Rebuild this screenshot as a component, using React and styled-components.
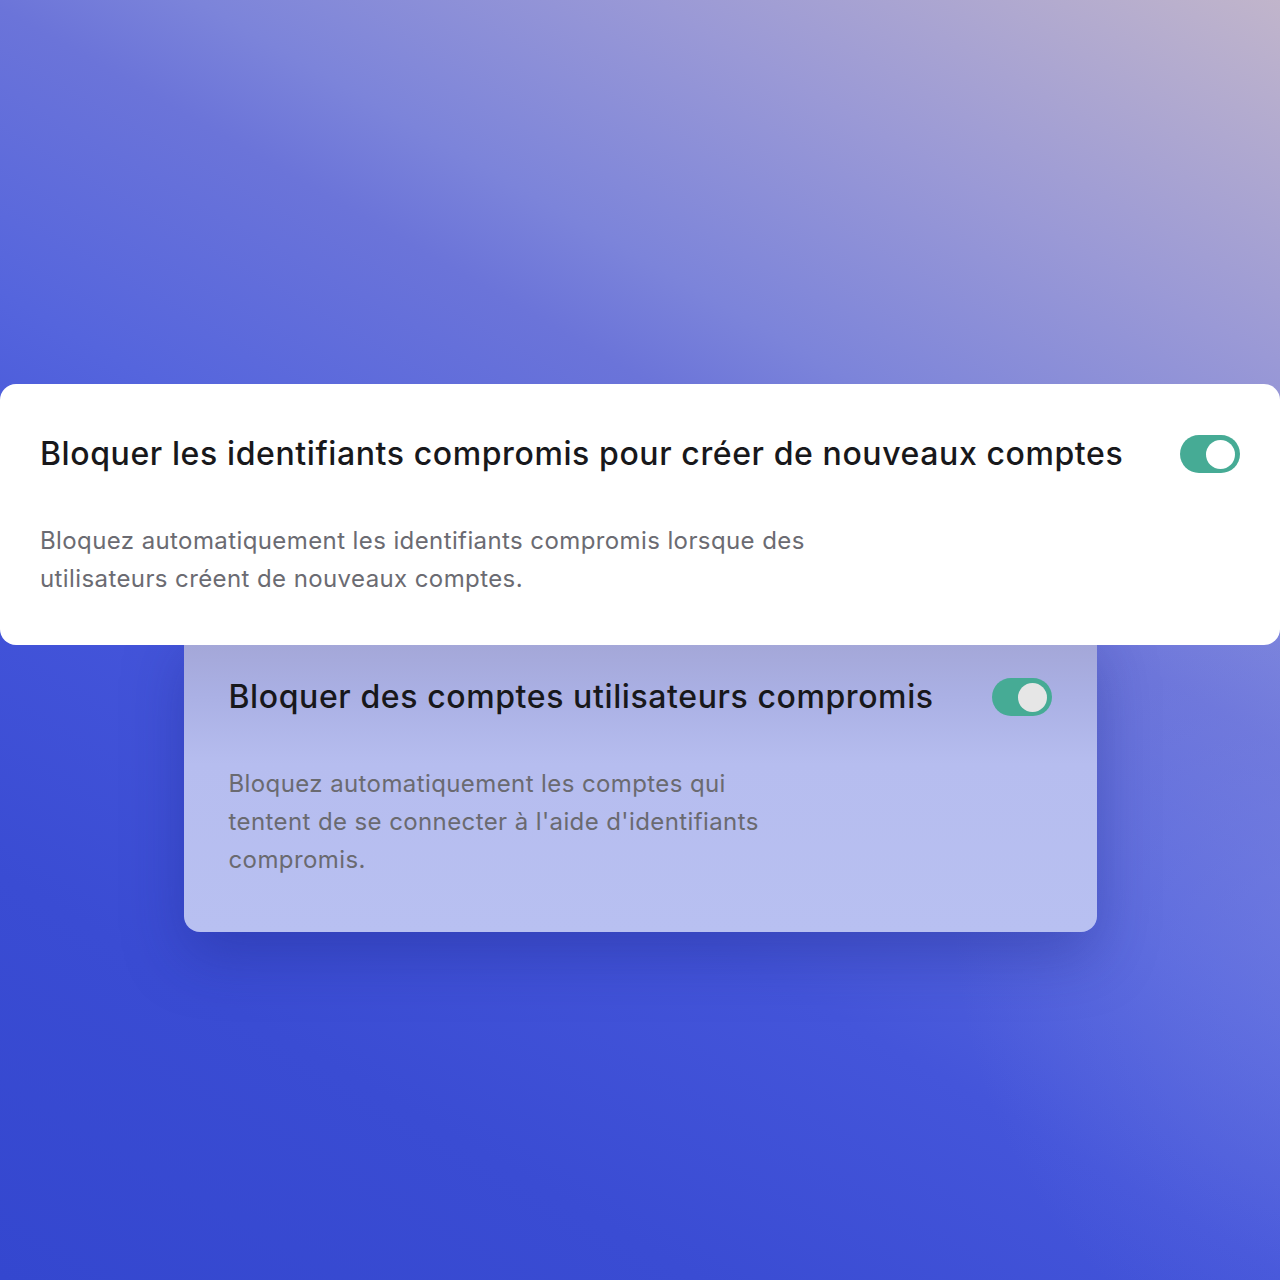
import React from "react";
import styled, { createGlobalStyle } from "styled-components";

const Global = createGlobalStyle`
  html, body { margin: 0; padding: 0; }
  body { font-family: Inter, "Noto Sans", sans-serif; }
  * { box-sizing: border-box; }
`;

const Stage = styled.div`
  width: 1280px;
  height: 1280px;
  overflow: hidden;
  padding-top: 384px;
  display: flex;
  flex-direction: column;
  align-items: center;
  background:
    radial-gradient(ellipse 380px 480px at 104% 70%, rgba(125, 135, 230, 0.45), rgba(125, 135, 230, 0) 100%),
    linear-gradient(210deg, #c1b5cb 0%, #9a99d6 18%, #7c84da 31%, #6b74d9 37%, #5565dd 51%, #4455da 63%, #3a4cd3 80%, #3447cf 100%);
`;

const Card = styled.section`
  position: relative;
  width: ${(p) => p.$width}px;
  padding: ${(p) => p.$pad};
  border-radius: 16px;
  background: ${(p) => p.$bg};
  z-index: ${(p) => p.$z};
  margin-top: ${(p) => p.$mt || 0}px;
  box-shadow: ${(p) => p.$shadow || "none"};
`;

const Header = styled.div`
  display: flex;
  align-items: center;
  justify-content: space-between;
  gap: 24px;
`;

const Title = styled.h2`
  margin: 0;
  font-size: 32px;
  line-height: 40px;
  font-weight: 450;
  color: #18181b;
  letter-spacing: ${(p) => p.$ls}px;
  white-space: nowrap;
`;

const Desc = styled.p`
  margin: 48px 0 0;
  font-size: 24px;
  line-height: 38px;
  font-weight: 400;
  color: ${(p) => p.$color};
  max-width: ${(p) => p.$max}px;
  letter-spacing: 0.4px;
`;

const Toggle = styled.div`
  flex: none;
  width: 60px;
  height: 38px;
  border-radius: 19px;
  background: #46ab95;
  display: flex;
  align-items: center;
  justify-content: flex-end;
  padding: 0 5px;
`;

const Knob = styled.div`
  width: 29px;
  height: 29px;
  border-radius: 50%;
  background: ${(p) => p.$color};
`;

export default function App() {
  return (
    <>
      <Global />
      <Stage>
        <Card $width={1280} $pad="50px 40px 47px" $bg="#ffffff" $z={2}>
          <Header>
            <Title $ls={0.6}>Bloquer les identifiants compromis pour créer de nouveaux comptes</Title>
            <Toggle>
              <Knob $color="#ffffff" />
            </Toggle>
          </Header>
          <Desc $color="#6b6b72" $max={840}>
            Bloquez automatiquement les identifiants compromis lorsque des utilisateurs créent de nouveaux comptes.
          </Desc>
        </Card>
        <Card
          $width={913}
          $pad="50px 45px 53px"
          $bg="linear-gradient(180deg, #a2a4d4 0%, #aab0e4 22%, #b6bdef 45%, #b8c0f1 100%)"
          $z={1}
          $mt={-18}
          $shadow="0 24px 60px rgba(25, 35, 130, 0.35)"
        >
          <Header>
            <Title $ls={0.6}>Bloquer des comptes utilisateurs compromis</Title>
            <Toggle>
              <Knob $color="#e6e6e6" />
            </Toggle>
          </Header>
          <Desc $color="#6a6a70" $max={560}>
            Bloquez automatiquement les comptes qui tentent de se connecter à l'aide d'identifiants compromis.
          </Desc>
        </Card>
      </Stage>
    </>
  );
}
